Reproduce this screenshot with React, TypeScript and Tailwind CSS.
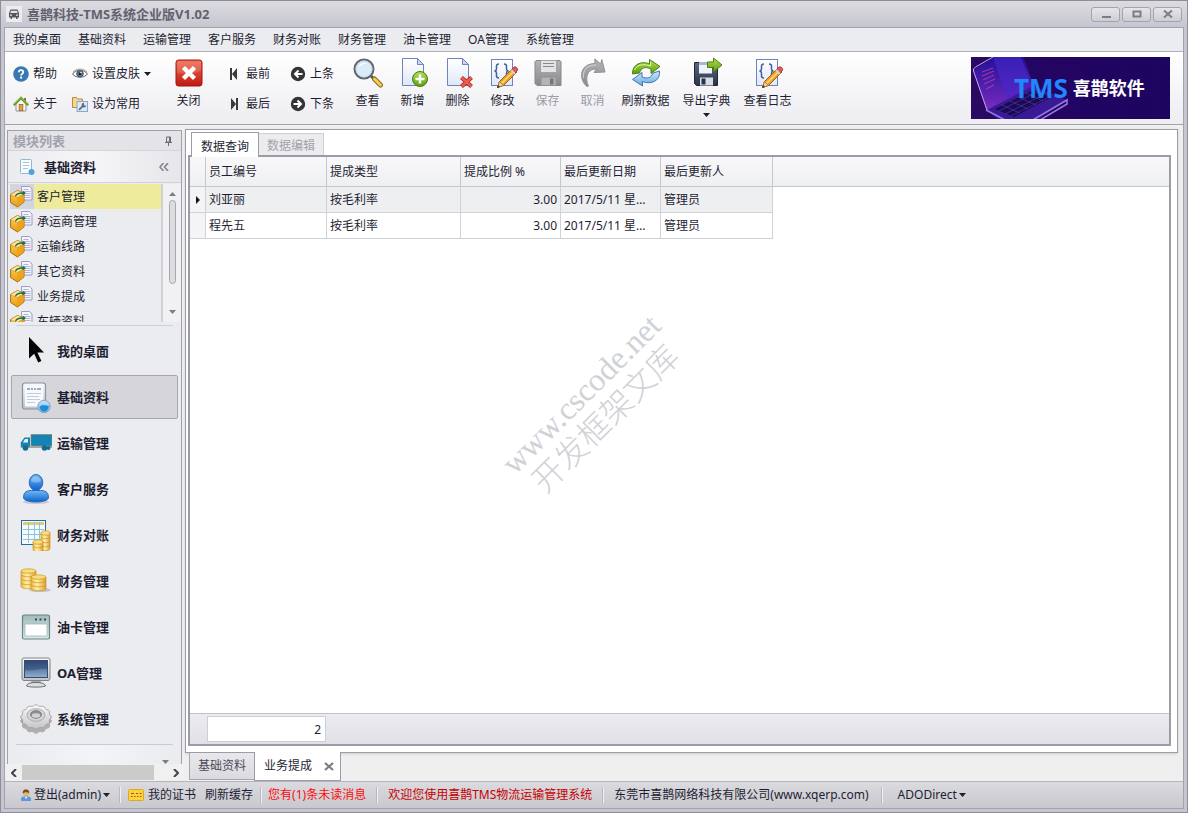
import { useState, type ReactNode } from "react";

const menus = ["我的桌面", "基础资料", "运输管理", "客户服务", "财务对账", "财务管理", "油卡管理", "OA管理", "系统管理"];

const modules = ["客户管理", "承运商管理", "运输线路", "其它资料", "业务提成", "车辆资料"];

const columns = ["员工编号", "提成类型", "提成比例 %", "最后更新日期", "最后更新人"];

const rows = [
  { name: "刘亚丽", type: "按毛利率", rate: "3.00", date: "2017/5/11 星期四", user: "管理员" },
  { name: "程先五", type: "按毛利率", rate: "3.00", date: "2017/5/11 星期四", user: "管理员" },
];

/* Shared gradients */
function Gradients() {
  const items: [string, string, string][] = [
    ["gRed", "#ee6a4e", "#c01a10"],
    ["gGreen", "#b6e04a", "#5a9c14"],
    ["gBlue", "#6fb8f6", "#0c62cc"],
    ["gSky", "#cfe8fb", "#62a8e0"],
    ["gPage", "#ffffff", "#dfe8f8"],
    ["gDisk", "#5a6880", "#2b3446"],
    ["gGray", "#b4b4b6", "#8a8a8e"],
    ["gScreen", "#2c4674", "#8fb0d4"],
    ["gMetal", "#fafafa", "#c4c4c6"],
    ["gTeal", "#9fbcbc", "#dbe8e8"],
    ["gBox", "#ffd75a", "#e89a12"],
    ["gLaptop", "#1c1098", "#7a2cc0"],
  ];
  return (
    <svg className="absolute w-0 h-0" aria-hidden="true">
      <defs>
        {items.map(([id, from, to]) => (
          <linearGradient key={id} id={id} x1="0" y1="0" x2="0" y2="1">
            <stop offset="0" stopColor={from} />
            <stop offset="1" stopColor={to} />
          </linearGradient>
        ))}
        <linearGradient id="gGold" x1="0" y1="0" x2="1" y2="0">
          <stop offset="0" stopColor="#f0b840" />
          <stop offset="0.4" stopColor="#fff0a8" />
          <stop offset="1" stopColor="#e2a02c" />
        </linearGradient>
        <linearGradient id="gBanner" x1="0" y1="0" x2="1" y2="0">
          <stop offset="0" stopColor="#2a0a62" />
          <stop offset="0.4" stopColor="#240463" />
          <stop offset="1" stopColor="#1c0560" />
        </linearGradient>
      </defs>
    </svg>
  );
}

function Icon({ size = 32, children }: { size?: number; children: ReactNode }) {
  return (
    <svg width={size} height={size} viewBox={`0 0 ${size} ${size}`} className="shrink-0" fill="none" aria-hidden="true">
      {children}
    </svg>
  );
}

/* Small icons, 16px */
const HelpIcon = () => (
  <Icon size={16}>
    <circle cx="8" cy="8" r="7.8" fill="#3a78b4" />
    <path d="M5.8 6.3c0-1.500 1-2.200 2.200-2.200s2.300.7 2.300 2c0 1.600-2.200 1.600-2.200 3.300" stroke="#fff" strokeWidth="1.8" />
    <rect x="7.1" y="10.6" width="2" height="2" fill="#fff" />
  </Icon>
);

const HomeIcon = () => (
  <Icon size={16}>
    <rect x="11" y="2" width="2" height="4" fill="#9a6a4a" />
    <path d="M3 8v7h10V8L8 3z" fill="#fdf6e6" stroke="#8a93a6" />
    <path d="M.8 9.2 8 2l7.2 7.2" stroke="#5c9a28" strokeWidth="2.4" />
    <path d="M.8 8.6 8 1.4l7.2 7.2" stroke="#a6d468" strokeWidth=".8" />
    <rect x="6.2" y="8.5" width="3.6" height="6.2" fill="#e8a04c" stroke="#9c6424" strokeWidth=".8" />
  </Icon>
);

const EyeIcon = () => (
  <Icon size={16}>
    <path d="M.6 8C4 3 12 3 15.4 8 12 12.4 4 12.4.6 8z" fill="#fff" stroke="#8b7f76" strokeWidth="1.1" />
    <circle cx="8" cy="7.8" r="3.3" fill="#5b80a4" stroke="#38516c" />
    <circle cx="8" cy="7.8" r="1.5" fill="#16202c" />
    <circle cx="9" cy="6.6" r=".8" fill="#fff" />
    <path d="M1 6.2C4.500 2 11.500 2 15 6.200" stroke="#a58e80" strokeWidth=".9" />
  </Icon>
);

const FolderToolIcon = () => (
  <Icon size={16}>
    <path d="M.5 11.500v-10h4l1 1.500h5v8.500z" fill="#f6d893" stroke="#b98a3c" />
    <rect x="5" y="5.500" width="10.500" height="10" fill="#dbe8f8" stroke="#8ca6cc" />
    <path d="m7 13.800 4-4" stroke="#5e6c80" strokeWidth="1.800" />
    <path d="M12 6.800a2.400 2.400 0 1 0 2.300 3l-1.800-.2-.6-1.200z" fill="#5e6c80" />
  </Icon>
);

const FirstIcon = () => (
  <Icon size={16}>
    <path d="M4 2h2v12H4zM11 2v12L6 8z" fill="#3a3a3c" />
  </Icon>
);

const LastIcon = () => (
  <Icon size={16}>
    <path d="M10 2h2v12h-2zM5 2v12l5-6z" fill="#3a3a3c" />
  </Icon>
);

const PrevIcon = () => (
  <Icon size={16}>
    <circle cx="8" cy="8" r="7.200" fill="#343436" />
    <path d="M12.500 8h-7M8.500 4.500 5 8l3.500 3.500" stroke="#fff" strokeWidth="2" />
  </Icon>
);

const NextIcon = () => (
  <Icon size={16}>
    <circle cx="8" cy="8" r="7.200" fill="#343436" />
    <path d="M3.500 8h7M7.500 4.500 11 8l-3.500 3.500" stroke="#fff" strokeWidth="2" />
  </Icon>
);

const UserSmallIcon = () => (
  <Icon size={12}>
    <path d="M1 12V9.500C1 8 2.500 7.500 6 7.500s5 .5 5 2V12z" fill="#5a9ad6" />
    <circle cx="6" cy="4.200" r="3" fill="#e8b070" />
    <path d="M2.800 4.500C2.500 1 4.500.5 6 .5s3.500.5 3.200 4C8 3 5 2.500 2.800 4.500z" fill="#7c4a1c" />
    <path d="m4.800 8 1.200 2 1.200-2z" fill="#fff" />
  </Icon>
);

const CertIcon = () => (
  <Icon size={16}>
    <rect x=".5" y="2.500" width="15" height="11" rx="1" fill="#ffd23c" stroke="#dca828" />
    <path d="M3 6.500h3M8 6.500h2M11.500 6.500h2M3 9.500h1.500M6 9.500h1.500M9 9.500h1.500M12 9.500h1.500" stroke="#8a5e10" />
  </Icon>
);

const BoxIcon = () => (
  <Icon size={24}>
    <path d="M11.500 1.500h8l2.500 2.500v11H11.500z" fill="#f4f4fb" stroke="#9c9cc8" />
    <path d="M13.500 4.500h5M13.500 6.500h7M13.500 8.500h7M13.500 10.500h7M13.500 12.500h7" stroke="#b4b4d4" />
    <path d="m.6 9.500 7-4 6.400 3v8.500l-6.500 5-6.900-4.500z" fill="url(#gBox)" stroke="#b06c10" />
    <path d="m.6 9.500 6.400 3 7-4-6.400-3z" fill="#ffe9a0" stroke="#d8942c" strokeWidth=".6" />
    <path d="M7.200 12.800v9L13.600 17V9z" fill="#eba41c" />
    <path d="M5.500 11.500c.5-3 3-3.500 7.500-3.500" stroke="#187048" strokeWidth="1.300" />
    <path d="m12.500 5.500 3.500 2.500-3.500 2.500z" fill="#187048" />
  </Icon>
);

/* Large toolbar icons */
const CloseIcon = () => (
  <Icon>
    <rect x="3" y="3" width="26" height="26" rx="2.500" fill="url(#gRed)" stroke="#9c1a12" />
    <path d="M4 4.500h24v9c-8 4-16 4-24 2z" fill="#fff" opacity=".14" />
    <path d="m10.500 10.500 11 11m0-11-11 11" stroke="#fff" strokeWidth="4.400" />
  </Icon>
);

const SearchIcon = () => (
  <Icon>
    <path d="m19 19 4 4" stroke="#54565c" strokeWidth="3" />
    <path d="m22.500 22 6 6" stroke="#8c6c20" strokeWidth="5" strokeLinecap="round" />
    <path d="m22.500 22 6 6" stroke="#f2cd52" strokeWidth="3" strokeLinecap="round" />
    <circle cx="12" cy="12" r="9.500" fill="#dcebf8" stroke="#5c6670" strokeWidth="2" />
    <circle cx="12" cy="12" r="8" stroke="#c6d4e0" />
    <path d="M6 11c1-4 5-6 9-4.500-4 0-7 2-9 4.500z" fill="#fff" />
  </Icon>
);

const Page = () => (
  <>
    <path d="M5.500 1.500h15l6 6v21h-21z" fill="url(#gPage)" stroke="#6f83bc" />
    <path d="M20.500 1.500v6h6z" fill="#c9d6f0" stroke="#6f83bc" />
  </>
);

const AddIcon = () => (
  <Icon>
    <Page />
    <circle cx="23" cy="22" r="7.500" fill="url(#gGreen)" stroke="#3f7c10" />
    <path d="M23 17.500v9M18.500 22h9" stroke="#fff" strokeWidth="2.600" />
  </Icon>
);

const DeleteIcon = () => (
  <Icon>
    <Page />
    <path d="m19.500 20.500 10 9m0-9-10 9" stroke="#a82018" strokeWidth="4.200" />
    <path d="m19.500 20.500 10 9m0-9-10 9" stroke="#ec5c4c" strokeWidth="2.600" />
  </Icon>
);

const EditIcon = () => (
  <Icon>
    <rect x="4.500" y="2.500" width="21" height="26" fill="url(#gPage)" stroke="#6f83bc" />
    <path d="M12 7c-2 0-2.500.5-2.500 2v3c0 1-.5 1.800-2 2 1.500.2 2 1 2 2v3c0 1.500.5 2 2.500 2M17 7c2 0 2.500.5 2.500 2v3c0 1 .5 1.800 2 2-1.500.2-2 1-2 2v2" stroke="#42609c" strokeWidth="1.500" />
    <path d="m10.500 30.500 2-6L26 11l4 4-13.500 13.500z" fill="#f2a022" stroke="#96601a" />
    <path d="m14.500 26.500 13-13" stroke="#ffdc84" strokeWidth="1.500" />
    <path d="m24.500 12.500 2.500-2.500c1.500-1 4.500 1.500 3.500 3.500L28 16z" fill="#e25858" stroke="#a03030" strokeWidth=".8" />
    <path d="m23.500 13.500 4 4 1.200-1.200-4-4z" fill="#d4dae4" />
    <path d="m10.500 30.500 2-6 4 4z" fill="#ead0a0" stroke="#96601a" strokeWidth=".6" />
    <path d="m10 31 1-3 2 2z" fill="#33302c" />
  </Icon>
);

const SaveIcon = () => (
  <Icon>
    <path d="M4 3.500h24l1 1v24H5l-2-2v-22z" fill="url(#gGray)" stroke="#88888b" />
    <rect x="8.500" y="3.500" width="16" height="12" fill="#e4e4e5" stroke="#a2a2a4" />
    <path d="M11 6.500h11M11 9.500h11" stroke="#88888a" />
    <rect x="9" y="20" width="15" height="8.500" fill="#b4b4b6" stroke="#909093" />
    <rect x="18" y="21.500" width="3.500" height="6" fill="#77777a" />
  </Icon>
);

const UndoIcon = () => (
  <Icon>
    <path d="M10 29.500C2 23 1.500 7 18 6.500L17.800 2l6 5 1-4.500 3.200 12.500-11 .5 2.500-3.500C8.500 12 8.500 23 11.500 29z" fill="url(#gGray)" stroke="#909094" />
    <path d="M6.500 21C5.500 13 10 8 19 8" stroke="#d4d4d6" />
  </Icon>
);

const RefreshIcon = () => (
  <Icon>
    <path d="M2.500 17C2 7 12 3.500 19.500 7V2.500L30 9.500l-9 7V12c-6-3-10-1-11.500 4z" fill="url(#gGreen)" stroke="#4c8414" />
    <path d="M29.500 14c1 10-8.500 14-17 10.500V29L2.500 22.500l9.500-7V20c5 2 9.500 1 11-4z" fill="url(#gSky)" stroke="#3f78b4" />
    <path d="M4.500 13C7 7.500 13 6.500 20.500 9V5" stroke="#e0f6a0" />
  </Icon>
);

const ExportIcon = () => (
  <Icon>
    <path d="M3.500 5.500h22l1 1v22h-21l-2-2z" fill="url(#gDisk)" stroke="#20283a" />
    <rect x="8" y="5.500" width="13" height="11" fill="#f0f4fa" />
    <rect x="8" y="5" width="13" height="3" fill="#aab8d0" />
    <rect x="9" y="20.500" width="13" height="8" fill="#d6dde8" />
    <rect x="10.500" y="21.500" width="4" height="6" fill="#2b3446" />
    <path d="M16.500 5h6V1l8.500 7-8.500 7v-4.500h-6z" fill="url(#gGreen)" stroke="#487f12" />
  </Icon>
);

/* Navigation icons */
const CursorIcon = () => (
  <Icon>
    <path d="M9 2v21.500l5.200-4.800 4 8.800 3.200-1.600-4-8.400H24z" fill="#050505" />
  </Icon>
);

const DocGlobeIcon = () => (
  <Icon>
    <rect x="2.500" y="2" width="23" height="26" rx="2.500" fill="url(#gMetal)" stroke="#8594a8" strokeWidth="1.200" />
    <rect x="5" y="4.500" width="18" height="21" fill="#f6fafe" />
    <path d="M7 8h3M11 8h2M14 8h2M17 8h4" stroke="#8492a6" strokeWidth="1.600" />
    <path d="M7 12.500h14M7 15.500h12M7 18.500h13M7 21.500h8" stroke="#c2ccd8" />
    <circle cx="24" cy="25.500" r="6.200" fill="url(#gSky)" stroke="#8ca4c0" />
    <path d="M19.500 26c3-3 6.500-1 9.500-1-1 4-2.800 5.500-4.800 5.500s-3.700-1.500-4.700-4.500z" fill="#1c8cdc" />
  </Icon>
);

const TruckIcon = () => (
  <Icon>
    <path d="M11 7.500h21v11.500H11z" fill="#1384b4" stroke="#8c8478" strokeWidth=".8" />
    <path d="M10 10.500H4.500L.8 15.500V20H10z" fill="#1384b4" />
    <path d="M8 12H5L2.800 15.500H8z" fill="#e6f2f6" />
    <path d="M.8 19.500h31.200v1.200H.8z" fill="#8c8478" />
    <circle cx="5.500" cy="21" r="2.800" fill="#136c94" />
    <circle cx="24.500" cy="21" r="2.800" fill="#136c94" />
    <circle cx="28.500" cy="21" r="2" fill="#136c94" />
  </Icon>
);

const UserIcon = () => (
  <Icon>
    <ellipse cx="16" cy="29" rx="13" ry="2" fill="#c6cad2" />
    <path d="M3.500 24.500c0-6 4-7 8-7h9c4 0 8 1 8 7 0 6-25 6-25 0z" fill="url(#gBlue)" stroke="#2a6cb8" />
    <ellipse cx="16" cy="9.500" rx="6.800" ry="8" fill="url(#gBlue)" stroke="#2a6cb8" />
    <path d="M11 8c1-6 8-6 10 0-3 2-7 2-10 0z" fill="#fff" opacity=".3" />
  </Icon>
);

const Coins = ({ x, y, n, w = 10 }: { x: number; y: number; n: number; w?: number }) => (
  <g stroke="#c08a20" strokeWidth=".6">
    {Array.from({ length: n }, (_, i) => (
      <path
        key={i}
        d={`M${x} ${y - i * 4}v3.500c0 3 ${w} 3 ${w} 0v-3.500z`}
        fill="url(#gGold)"
      />
    ))}
    <ellipse cx={x + w / 2} cy={y - (n - 1) * 4} rx={w / 2} ry="2.200" fill="#fbdc78" />
  </g>
);

const SheetCoinsIcon = () => (
  <Icon>
    <rect x="1.500" y="1.500" width="24" height="24" fill="#f4fbff" stroke="#2a6c94" />
    <rect x="3" y="3" width="21" height="3" fill="#e4c87c" />
    <path d="M8.500 3v21M14.500 3v21M19.500 3v21M3 10.500h21M3 15.500h21M3 20.500h21" stroke="#8cc4dc" />
    <Coins x={21} y={26} n={4} w={9} />
    <Coins x={13} y={27} n={2} />
  </Icon>
);

const CoinsIcon = () => (
  <Icon>
    <ellipse cx="20" cy="25" rx="11" ry="2" fill="#c6c4be" />
    <Coins x={1} y={18} n={4} w={15} />
    <Coins x={11} y={20} n={3} w={15} />
  </Icon>
);

const WindowIcon = () => (
  <Icon>
    <rect x="2.500" y="4" width="27" height="24" rx="1.500" fill="url(#gTeal)" stroke="#6c8484" strokeWidth="1.200" />
    <path d="M15 8.500h2M19.500 8.500h2M24 8.500h2" stroke="#34484a" strokeWidth="2" />
    <rect x="5" y="13" width="22" height="12" fill="#fff" stroke="#a2b8b8" strokeWidth=".8" />
  </Icon>
);

const MonitorIcon = () => (
  <Icon>
    <path d="M12 24h8l1 3H11z" fill="#b2b6ba" stroke="#8c9094" strokeWidth=".6" />
    <path d="M6.500 29c1-3 5-3.500 9.500-3.500s8.500.5 9.500 3.500c-4 1.500-15 1.500-19 0z" fill="#dcdee0" stroke="#4c5054" strokeWidth=".8" />
    <rect x="2" y="1" width="28" height="22.500" rx="2" fill="url(#gMetal)" stroke="#7e848a" />
    <rect x="4.500" y="3.500" width="23" height="17" fill="url(#gScreen)" stroke="#3a4a68" />
    <path d="M5 13c8 2 14-2 22-1V4H5z" fill="#2c4878" opacity=".5" />
  </Icon>
);

// scalloped ellipse, twelve teeth
const cog = (cy: number) =>
  Array.from({ length: 73 }, (_, i) => {
    const a = (i / 72) * Math.PI * 2;
    const k = 1 + 0.07 * Math.max(-0.7, Math.min(0.7, Math.cos(a * 12)));
    return `${i ? "L" : "M"}${(16 + 14.6 * k * Math.cos(a)).toFixed(1)} ${(cy + 11.6 * k * Math.sin(a)).toFixed(1)}`;
  }).join("") + "z";

const GearIcon = () => (
  <Icon>
    <path d={cog(18)} fill="#b0b0b2" stroke="#a2a2a4" strokeWidth=".8" />
    <path d={cog(14)} fill="url(#gMetal)" stroke="#98989a" strokeWidth=".8" />
    <ellipse cx="16" cy="12" rx="9" ry="6.300" fill="#d4d4d6" stroke="#a0a0a2" strokeWidth=".8" />
    <ellipse cx="16" cy="11.500" rx="5.500" ry="3.800" fill="#8c8e92" stroke="#707276" strokeWidth=".8" />
    <ellipse cx="16" cy="12.500" rx="4.200" ry="2.300" fill="#d2d2d4" />
  </Icon>
);

const Caret = () => (
  <svg width="7" height="4" viewBox="0 0 7 4" className="shrink-0" aria-hidden="true">
    <path d="M0 0h7L3.500 4z" fill="#1e1e2c" />
  </svg>
);

const Arrow = ({ up }: { up?: boolean }) => (
  <svg width="7" height="4" viewBox="0 0 7 4" aria-hidden="true">
    <path d={up ? "M0 4h7L3.500 0z" : "M0 0h7L3.500 4z"} fill="#7c7c86" />
  </svg>
);

const navItems = [
  { label: "我的桌面", icon: <CursorIcon /> },
  { label: "基础资料", icon: <DocGlobeIcon /> },
  { label: "运输管理", icon: <TruckIcon /> },
  { label: "客户服务", icon: <UserIcon /> },
  { label: "财务对账", icon: <SheetCoinsIcon /> },
  { label: "财务管理", icon: <CoinsIcon /> },
  { label: "油卡管理", icon: <WindowIcon /> },
  { label: "OA管理", icon: <MonitorIcon /> },
  { label: "系统管理", icon: <GearIcon /> },
];

function SmallButton({ icon, label, caret }: { icon: ReactNode; label: string; caret?: boolean }) {
  return (
    <button className="flex items-center gap-1 h-[30px] whitespace-nowrap">
      {icon}
      <span>{label}</span>
      {caret && <Caret />}
    </button>
  );
}

function BigButton({ icon, label, wide, disabled, caret }: { icon: ReactNode; label: string; wide?: boolean; disabled?: boolean; caret?: boolean }) {
  return (
    <button
      disabled={disabled}
      className={`flex flex-col items-center shrink-0 whitespace-nowrap disabled:text-[#9c9ca4] ${wide ? "w-[61px]" : "w-[45px]"}`}
    >
      {icon}
      <span className="leading-6">{label}</span>
      {caret && <Caret />}
    </button>
  );
}

function TitleBar() {
  const btn = "w-[29px] h-[15px] flex items-center justify-center rounded-[3px] border border-[#a3a3ac] bg-linear-to-b from-[#e6e6ea] to-[#cdcdd3]";
  return (
    <header className="h-[26px] shrink-0 flex items-center pl-[2px] pr-[2px] text-[13px] font-bold text-[#62626e]">
      <span className="w-4 h-4 flex items-center justify-center bg-[#ececef] mr-[5px]">
        <svg width="12" height="10" viewBox="0 0 12 10" aria-hidden="true">
          <path d="M1 4 2.500.5h7L11 4v4.500h-1.500V10h-1.500V8.500H4V10H2.500V8.500H1z" fill="#55555e" />
          <path d="M3 1.800h6l.8 2.200H2.200z" fill="#e2e2e6" />
          <path d="M2 5.500h2v1.200H2zM8 5.500h2v1.200H8z" fill="#e2e2e6" />
        </svg>
      </span>
      <h1 className="flex-1">喜鹊科技-TMS系统企业版V1.02</h1>
      <div className="flex gap-[2px]">
        <button className={btn} aria-label="最小化">
          <svg width="10" height="9"><path d="M1 6h9v2H1z" fill="#7c7c86" /></svg>
        </button>
        <button className={btn} aria-label="最大化">
          <svg width="10" height="8"><rect x="1.500" y="1.500" width="7" height="5" fill="none" stroke="#7c7c86" strokeWidth="2" /></svg>
        </button>
        <button className={btn} aria-label="关闭窗口">
          <svg width="10" height="8"><path d="m1 .5 8 7m0-7-8 7" stroke="#7c7c86" strokeWidth="2" /></svg>
        </button>
      </div>
    </header>
  );
}

function Banner() {
  return (
    <div className="relative w-[199px] h-[62px] shrink-0 overflow-hidden flex items-center">
      <svg width="199" height="62" viewBox="0 0 199 62" className="absolute inset-0" aria-hidden="true">
        <rect width="199" height="62" fill="url(#gBanner)" />
        <path d="M2 13 22 1q26-6 30-2l12 34-48 21z" fill="url(#gLaptop)" />
        <path d="M22 0h28l10 28-24 14z" fill="#4a28cc" opacity=".6" />
        <path d="M16 53 2.500 14q-1-2 2-4L22 0" fill="none" stroke="#c8a4ec" />
        <path d="m11 15 11-4M11 19l12-5M12 23l11-5M13 27l11-5M15 32l8-4" stroke="#e0479c" strokeWidth="1.200" opacity=".6" />
        <path d="m16 53 46-24 34 14-36 24H32z" fill="#3a1a94" />
        <path d="m24 52 38-19 18 7-37 20z" fill="#190a58" />
        <path d="m28 54 38-19m-32 22 38-19m-32 21 36-18M31 48l18 8M39 44l18 8M47 40l18 8M55 36l17 8" stroke="#5c3ca8" strokeWidth=".6" />
        <path d="M15 53 36 64M60 64 96 43v4L64 66" fill="none" stroke="#9676dc" strokeWidth="1.600" />
      </svg>
      <span className="relative ml-[43px] text-[26px] font-bold text-[#2088fa]">TMS</span>
      <span className="relative ml-[5px] text-lg font-bold text-white">喜鹊软件</span>
    </div>
  );
}

function Toolbar() {
  return (
    <div className="h-[73px] shrink-0 flex items-start pt-[5px] pl-2 pr-[13px] border-b border-[#a3a3ae] bg-linear-to-b from-white to-[#ededf2]">
      <div className="pt-[2px] flex">
        <div className="w-[59px]">
          <SmallButton icon={<HelpIcon />} label="帮助" />
          <SmallButton icon={<HomeIcon />} label="关于" />
        </div>
        <div className="w-[94px]">
          <SmallButton icon={<EyeIcon />} label="设置皮肤" caret />
          <SmallButton icon={<FolderToolIcon />} label="设为常用" />
        </div>
      </div>
      <BigButton icon={<CloseIcon />} label="关闭" />
      <div className="pt-[2px] pl-[15px] flex">
        <div className="w-16">
          <SmallButton icon={<FirstIcon />} label="最前" />
          <SmallButton icon={<LastIcon />} label="最后" />
        </div>
        <div className="w-[55px]">
          <SmallButton icon={<PrevIcon />} label="上条" />
          <SmallButton icon={<NextIcon />} label="下条" />
        </div>
      </div>
      <BigButton icon={<SearchIcon />} label="查看" />
      <BigButton icon={<AddIcon />} label="新增" />
      <BigButton icon={<DeleteIcon />} label="删除" />
      <BigButton icon={<EditIcon />} label="修改" />
      <BigButton icon={<SaveIcon />} label="保存" disabled />
      <BigButton icon={<UndoIcon />} label="取消" disabled />
      <BigButton icon={<RefreshIcon />} label="刷新数据" wide />
      <BigButton icon={<ExportIcon />} label="导出字典" wide caret />
      <BigButton icon={<EditIcon />} label="查看日志" wide />
      <div className="flex-1" />
      <Banner />
    </div>
  );
}

function Sidebar() {
  const [module, setModule] = useState("客户管理");
  const [nav, setNav] = useState("基础资料");

  return (
    <aside className="w-[179px] shrink-0 flex flex-col pt-[5px]">
      <div className="flex-1 flex flex-col ml-[2px] mr-[2px] border border-b-0 border-[#a0a0aa] bg-[#ebecef]">
        <div className="h-[20px] flex items-center justify-between pl-[5px] pr-2 border-b border-[#d4d4da] bg-[#e4e4e8] text-[13px] font-bold text-[#a2a2ac]">
          模块列表
          <button aria-label="固定">
            <svg width="9" height="10" viewBox="0 0 9 10"><path d="M2.500 1h4v5h-4zM1 6.500h7M4.500 7v3" fill="none" stroke="#6c6c76" /><path d="M5 1h2v5H5z" fill="#6c6c76" /></svg>
          </button>
        </div>

        <div className="h-[32px] flex items-center pl-[10px] pr-3 border-b border-[#d2d2d8] bg-linear-to-r from-[#ebecef] via-[#f5f5f8] to-[#e6e6ea]">
          <svg width="18" height="18" viewBox="0 0 18 18" aria-hidden="true">
            <rect x="2.500" y="1.500" width="11" height="14" rx="1" fill="#f6fbff" stroke="#9ab4cc" />
            <path d="M5 4.500h6M5 7.500h6M5 10.500h5" stroke="#a8c4dc" />
            <circle cx="13.500" cy="14" r="3" fill="#4aa4e0" />
          </svg>
          <h2 className="flex-1 ml-2 text-[13px] font-bold">{nav}</h2>
          <button aria-label="折叠">
            <svg width="10" height="8" viewBox="0 0 10 8" fill="none" stroke="#82828c" strokeWidth="1.600"><path d="M4.500 0 1 4l3.500 4M9 0 5.500 4 9 8" /></svg>
          </button>
        </div>

        <div className="flex h-[138px] mt-px">
          <ul className="flex-1 overflow-hidden pl-[2px]">
            {modules.map((m) => (
              <li key={m}>
                <button onClick={() => setModule(m)} className="w-full h-[25px] flex items-center">
                  <span className={`h-full flex items-center ${m === module ? "bg-[#d4d4de]" : ""}`}>
                    <BoxIcon />
                  </span>
                  <span className={`flex-1 h-full flex items-center pl-[3px] ${m === module ? "bg-[#efeb9c]" : ""}`}>{m}</span>
                </button>
              </li>
            ))}
          </ul>
          <div className="w-[20px] flex flex-col items-center py-2 border-l-2 border-[#d0d0d5] bg-[#f1f1f4]">
            <Arrow up />
            <div className="w-[7px] h-[84px] mt-1 mb-auto rounded-full border border-[#a8a8b0] bg-[#dcdce1]" />
            <Arrow />
          </div>
        </div>
        <div className="h-[4px] mx-2 border-b border-[#d0d0d6]" />

        <nav className="flex-1 pt-[3px] pl-[3px] pr-[3px]">
          {navItems.map(({ label, icon }) => (
            <button
              key={label}
              onClick={() => setNav(label)}
              className={`w-full h-[44px] my-[2px] first:mt-0 flex items-center gap-[5px] pl-2 rounded-[2px] border text-[13px] font-bold ${
                label === nav ? "border-[#a6a6b0] bg-[#d5d5da]" : "border-transparent"
              }`}
            >
              {icon}
              {label}
            </button>
          ))}
        </nav>
        <div className="h-[20px] mx-2 flex items-end justify-end pr-1 border-t border-[#cacad0] bg-linear-to-r from-[#ebecef] via-[#f3f4f7] to-[#ebecef]">
          <Arrow />
        </div>
      </div>

      {/* Horizontal scroll bar */}
      <div className="h-[17px] flex items-center bg-[#f0f0f1]">
        <button aria-label="向左" className="w-[17px] flex justify-center">
          <svg width="6" height="8" viewBox="0 0 6 8" fill="none" stroke="#44444a" strokeWidth="2"><path d="M5 0 1 4l4 4" /></svg>
        </button>
        <div className="flex-1 h-[15px]">
          <div className="w-[132px] h-full bg-[#cbcbcb]" />
        </div>
        <button aria-label="向右" className="w-[17px] flex justify-center">
          <svg width="6" height="8" viewBox="0 0 6 8" fill="none" stroke="#44444a" strokeWidth="2"><path d="m1 0 4 4-4 4" /></svg>
        </button>
      </div>
    </aside>
  );
}

function DataGrid() {
  const [selected, setSelected] = useState(0);
  const cell = "h-[26px] px-[3px] border-r border-b border-[#cfd2d8] whitespace-nowrap overflow-hidden text-ellipsis";

  return (
    <div className="relative flex-1 flex flex-col border-2 border-[#9c9ca8] bg-white">
      <table className="w-full table-fixed border-separate border-spacing-0 text-left">
        <colgroup>
          <col className="w-[16px]" />
          <col className="w-[121px]" />
          <col className="w-[134px]" />
          <col className="w-[100px]" />
          <col className="w-[100px]" />
          <col className="w-[112px]" />
          <col />
        </colgroup>
        <thead>
          <tr className="bg-linear-to-b from-[#f8f8fa] to-[#eeeff2]">
            <th className="h-[30px] border-r border-b border-[#c4c7ce]" />
            {columns.map((c) => (
              <th key={c} className="h-[30px] px-[3px] border-r border-b border-[#c4c7ce] font-normal whitespace-nowrap">{c}</th>
            ))}
            <th className="h-[30px] border-b border-[#c4c7ce]" />
          </tr>
        </thead>
        <tbody>
          {rows.map((r, i) => (
            <tr key={i} onClick={() => setSelected(i)} className={i === selected ? "bg-[#eeeff1]" : ""}>
              <td className="h-[26px] border-r border-b border-[#cfd2d8] bg-[#f4f4f6]">
                {i === selected && (
                  <svg width="4" height="8" className="mx-auto"><path d="M0 0v8l4-4z" fill="#14141c" /></svg>
                )}
              </td>
              <td className={cell}>{r.name}</td>
              <td className={cell}>{r.type}</td>
              <td className={`${cell} text-right`}>{r.rate}</td>
              <td className={cell}>{r.date}</td>
              <td className={cell}>{r.user}</td>
              <td className="bg-white" />
            </tr>
          ))}
        </tbody>
      </table>

      {/* Watermark */}
      <div className="absolute left-[273px] top-[216px] w-[260px] -rotate-45 text-center text-[32px] leading-[33px] text-[#cfd2d6] pointer-events-none select-none">
        <p className="font-['Liberation_Serif','Noto_Sans_CJK_SC',serif]">www.cscode.net</p>
        <p className="font-light">开发框架文库</p>
      </div>

      <div className="mt-auto h-[31px] flex items-center pl-[17px] border-t border-[#c2c2ca] bg-linear-to-b from-[#ececf0] to-[#e0e0e6]">
        <input
          aria-label="记录数"
          readOnly
          value={rows.length}
          className="w-[119px] h-[26px] px-1 border border-[#cdcdd4] bg-white text-right"
        />
      </div>
    </div>
  );
}

function Workspace() {
  return (
    <main className="flex-1 min-w-0 flex flex-col pt-[4px] pl-px pr-[5px]">
      <section className="flex-1 flex flex-col pt-[2px] pl-[2px] pb-[6px] pr-[6px] border border-[#9c9ca8] bg-white shadow">
        <div className="flex items-end pl-[3px]" role="tablist">
          <button role="tab" aria-selected="true" className="relative -mr-px w-[68px] h-[25px] -mb-[2px] pt-[3px] border border-b-0 border-[#9c9ca8] bg-white z-10">
            数据查询
          </button>
          <button role="tab" aria-selected="false" className="w-[66px] h-[22px] pt-[2px] border border-b-0 border-[#cfcfd6] bg-[#ececef] text-[#a2a2aa]">
            数据编辑
          </button>
        </div>
        <DataGrid />
      </section>

      <div className="h-[28px] flex items-start pl-[4px]">
        <button className="h-[27px] px-2 -mr-px border border-t-0 border-[#a6a6b0] bg-linear-to-b from-[#e8e8ec] to-[#dadae0] text-[#4a4a58]">
          基础资料
        </button>
        <div className="relative h-[29px] -mt-px flex items-center gap-3 pl-[9px] pr-[6px] border border-t-0 border-[#9c9ca8] bg-white">
          <button>业务提成</button>
          <button aria-label="关闭标签">
            <svg width="10" height="9" viewBox="0 0 10 9"><path d="m1 1 8 7m0-7L1 8" stroke="#7c7c86" strokeWidth="2.200" /></svg>
          </button>
        </div>
      </div>
    </main>
  );
}

function StatusBar() {
  const sep = "w-px h-[16px] bg-[#f0f0f3] border-l border-[#b8b8c0] box-content";
  return (
    <footer className="h-[27px] shrink-0 flex items-center pl-[15px] border-t border-[#b4b4bc] bg-linear-to-b from-[#dadadf] to-[#c8c8ce] whitespace-nowrap">
      <button className="flex items-center gap-[2px]">
        <UserSmallIcon />
        登出(admin)
        <Caret />
      </button>
      <div className={`${sep} ml-[9px] mr-[7px]`} />
      <button className="flex items-center gap-1">
        <CertIcon />
        我的证书
      </button>
      <button className="ml-[9px]">刷新缓存</button>
      <div className={`${sep} ml-[7px] mr-[6px]`} />
      <span className="text-[#ff0a0a]">您有(1)条未读消息</span>
      <div className={`${sep} mx-[10px]`} />
      <span className="text-[#c80000]">欢迎您使用喜鹊TMS物流运输管理系统</span>
      <div className={`${sep} mx-[10px]`} />
      <span>东莞市喜鹊网络科技有限公司(www.xqerp.com)</span>
      <div className={`${sep} ml-[12px] mr-[15px]`} />
      <button className="flex items-center gap-[2px]">
        ADODirect
        <Caret />
      </button>
    </footer>
  );
}

export default function App() {
  return (
    <div className="min-h-screen flex flex-col border border-[#8e8e9a] bg-[#cbcbd3] bg-linear-to-b from-[#dcdce0] to-[#c6c6d0] to-[26px] px-[3px] pb-[3px] font-['Noto_Sans','Noto_Sans_CJK_SC',sans-serif] text-[12px] leading-4 text-[#1e1e32]">
      <Gradients />
      <TitleBar />
      <div className="flex-1 flex flex-col border border-[#a3a3ae] bg-[#efeff0]">
        <nav className="h-[24px] shrink-0 flex items-center gap-[17px] pl-2 border-b border-[#b0b0ba] bg-[#ebecef]">
          {menus.map((m) => (
            <button key={m}>{m}</button>
          ))}
        </nav>
        <Toolbar />
        <div className="flex-1 flex">
          <Sidebar />
          <Workspace />
        </div>
        <StatusBar />
      </div>
    </div>
  );
}
